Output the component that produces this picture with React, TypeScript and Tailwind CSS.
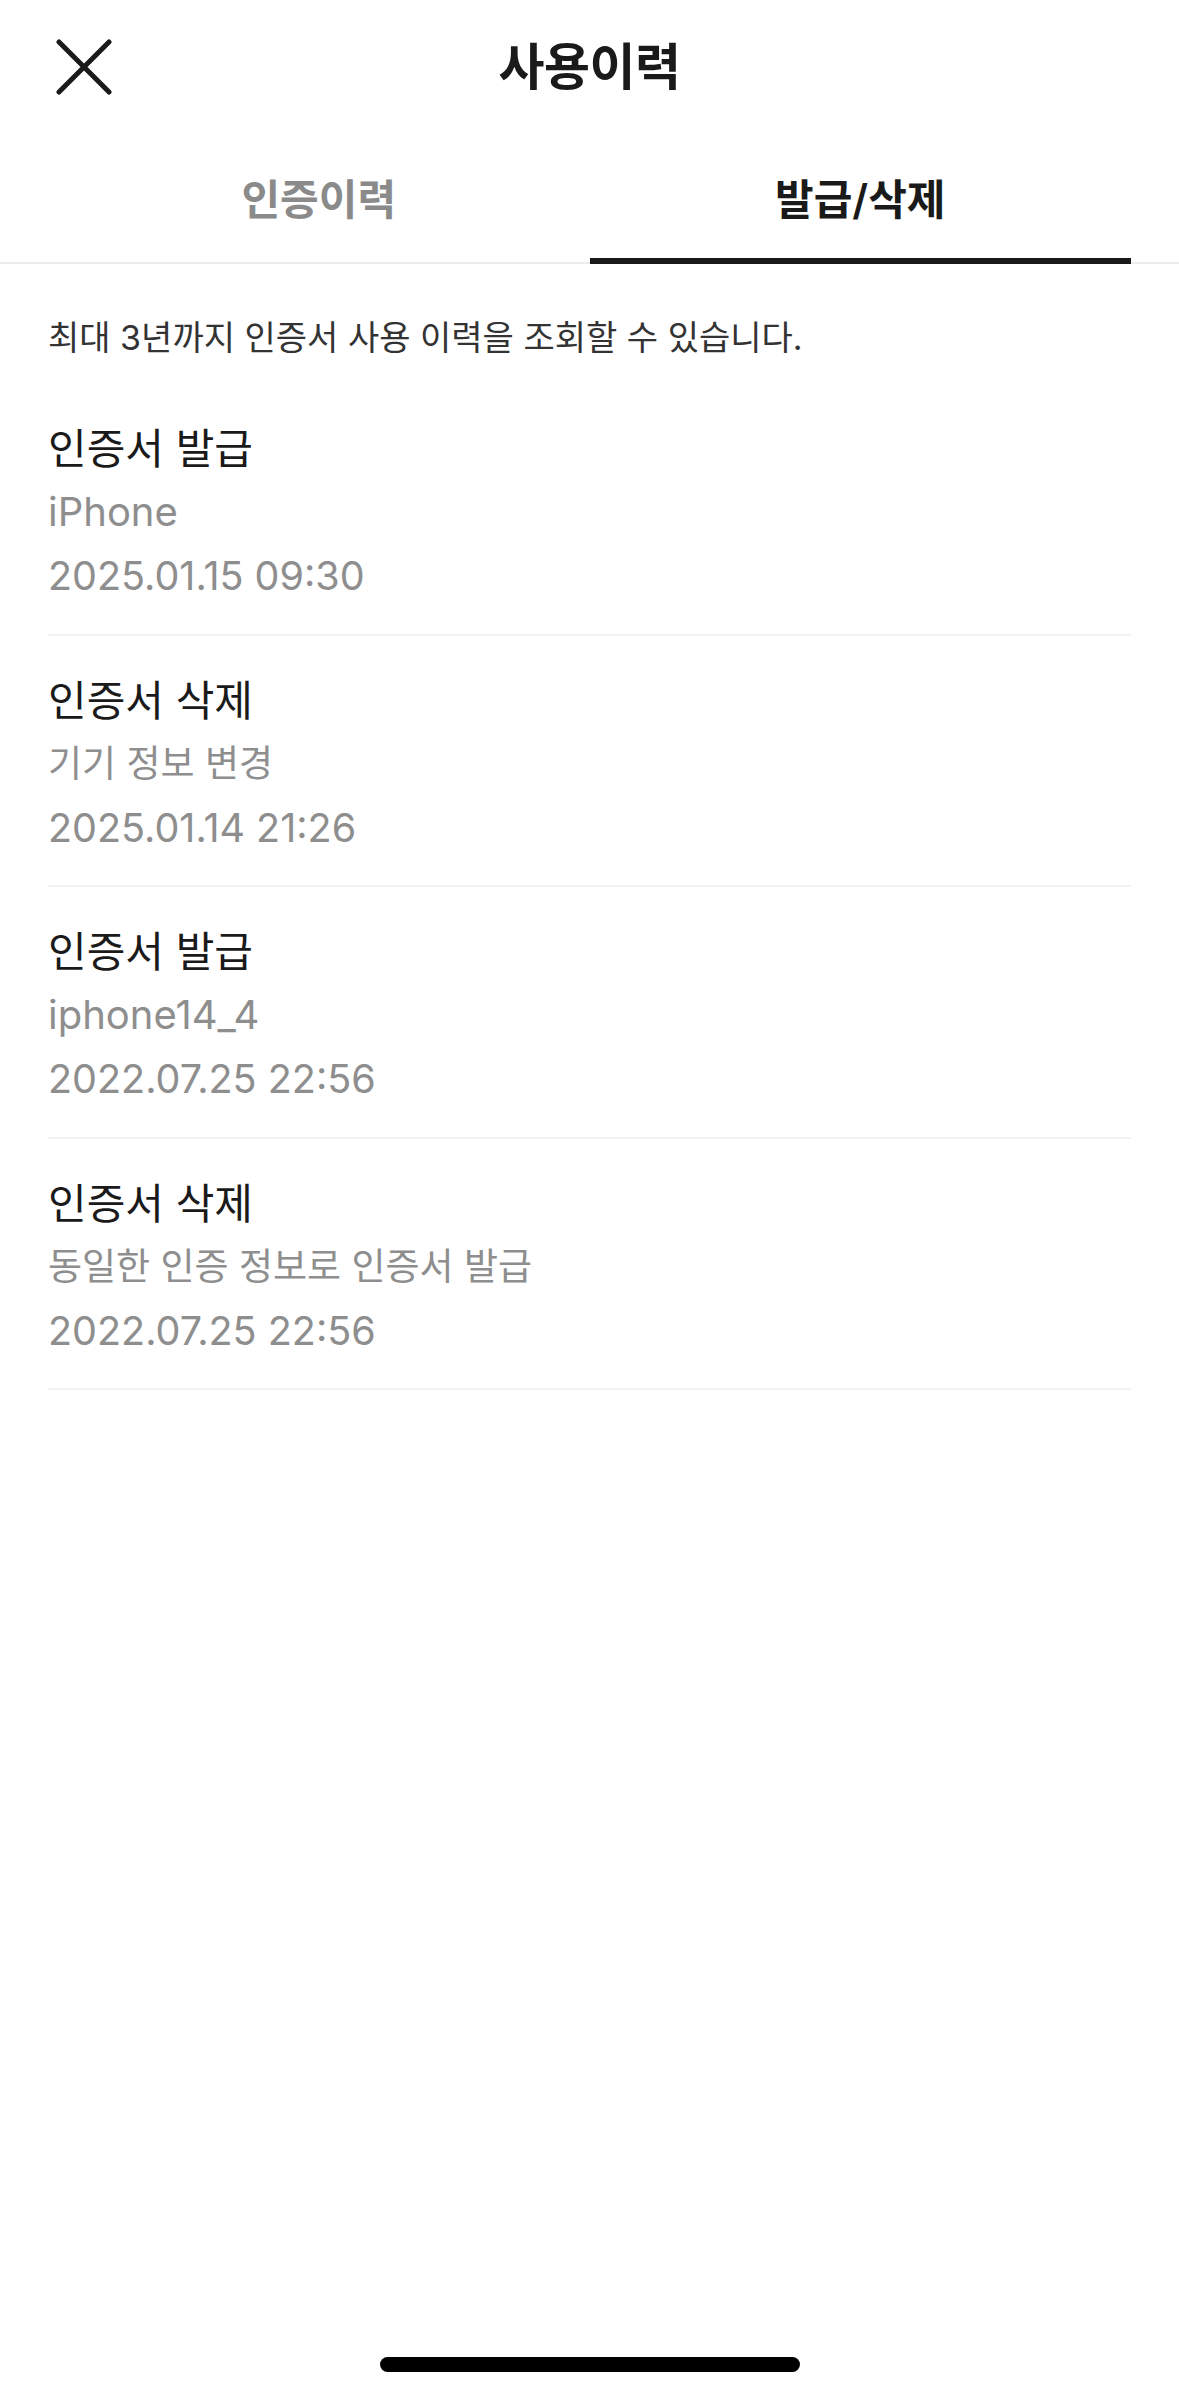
import React from "react";

const FONT = { fontFamily: 'Inter, "Noto Sans CJK KR", sans-serif' };

type Item = { title: string; sub: string; latin: boolean; date: string };

const items: Item[] = [
  { title: "인증서 발급", sub: "iPhone", latin: true, date: "2025.01.15 09:30" },
  { title: "인증서 삭제", sub: "기기 정보 변경", latin: false, date: "2025.01.14 21:26" },
  { title: "인증서 발급", sub: "iphone14_4", latin: true, date: "2022.07.25 22:56" },
  { title: "인증서 삭제", sub: "동일한 인증 정보로 인증서 발급", latin: false, date: "2022.07.25 22:56" },
];

export default function App() {
  return (
    <div className="min-h-[2396px] w-full bg-white flex flex-col text-[#1a1a1a]" style={FONT}>
      {/* Header */}
      <div className="relative h-[134px] flex items-center justify-center">
        <button className="absolute left-[56px] top-[39px] w-[56px] h-[56px] flex items-center justify-center">
          <svg width="56" height="56" viewBox="0 0 56 56" fill="none">
            <path d="M3 3 L53 53 M53 3 L3 53" stroke="#1a1a1a" strokeWidth="5" strokeLinecap="round" />
          </svg>
        </button>
        <div className="text-[50px] font-semibold tracking-[-0.5px]">사용이력</div>
      </div>

      {/* Tabs */}
      <div className="border-b-2 border-[#ececec]">
        <div className="flex px-[48px]">
          <div className="flex-1 h-[130px] pt-[6px] flex items-center justify-center border-b-[6px] border-transparent text-[42px] font-semibold text-[#8a8a8a] -mb-[2px]">
            인증이력
          </div>
          <div className="flex-1 h-[130px] pt-[6px] flex items-center justify-center border-b-[6px] border-[#1a1a1a] text-[42px] font-semibold text-[#1a1a1a] -mb-[2px]">
            발급/삭제
          </div>
        </div>
      </div>

      {/* Description */}
      <div className="px-[48px] pt-[55px] pb-[27px] text-[34px] leading-[38px] text-[#333333]">
        최대 3년까지 인증서 사용 이력을 조회할 수 있습니다.
      </div>

      {/* List */}
      <div className="px-[48px] flex flex-col">
        {items.map((it, i) => (
          <div key={i} className="pt-[32px] pb-[23.5px] border-b-2 border-[#f2f2f2] flex flex-col">
            <div className="text-[42px] leading-[66px] text-[#1a1a1a]">{it.title}</div>
            <div
              className={
                it.latin
                  ? "text-[40px] leading-[60px] text-[#8e8e8e]"
                  : "text-[37px] leading-[60px] text-[#8e8e8e]"
              }
            >
              {it.sub}
            </div>
            <div className="text-[39.5px] leading-[68px] text-[#8e8e8e]">{it.date}</div>
          </div>
        ))}
      </div>

      <div className="flex-1" />

      {/* Home indicator */}
      <div className="flex justify-center pb-[24px]">
        <div className="w-[420px] h-[15px] rounded-full bg-black" />
      </div>
    </div>
  );
}
